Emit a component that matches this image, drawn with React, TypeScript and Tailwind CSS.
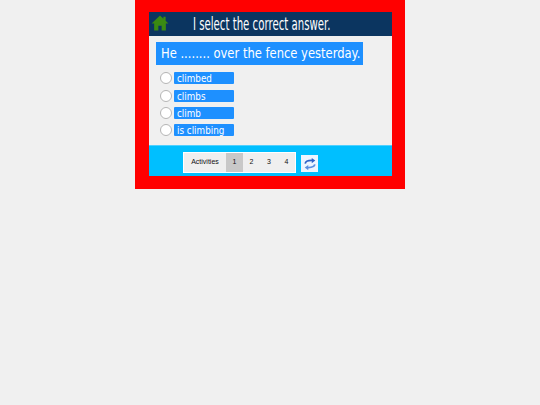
import React from 'react';

const options = [
  { label: 'climbed', mb: 'mb-[5px]' },
  { label: 'climbs', mb: 'mb-[4px]' },
  { label: 'climb', mb: 'mb-[4px]' },
  { label: 'is climbing', mb: '' },
];

const App: React.FC = () => {
  return (
    <div className="w-[540px] h-[405px] bg-[#f0f0f0] font-['DejaVu_Sans',sans-serif]">
      <div className="mx-auto w-[270px] h-[189px] bg-[#ff0000] pt-3 pl-[14px] pr-[13px]">
        <div className="h-6 bg-[#0b3560] flex items-center">
          <svg viewBox="0 0 24 24" className="w-[18px] h-[18px] ml-[2px] mb-[3px] shrink-0" fill="#3a8a12">
            <path d="M12 2 .8 12.6h3.4V22h5.6v-6.5h4.4V22h5.6v-9.4h3.4l-3.7-3.5V3.5h-3v2.8z" />
          </svg>
          <span className="ml-[24px] shrink-0 text-[18px] leading-6 text-white whitespace-nowrap inline-block origin-left scale-x-[0.565]">
            I select the correct answer.
          </span>
        </div>
        <div className="h-[109px] bg-[#f0f0f0] pt-[6px] pl-[7px]">
          <div className="w-[207px] h-[23px] bg-[#1e90ff] text-white text-[13.5px] leading-[22px] pl-[5px] whitespace-nowrap overflow-hidden">
            <span className="inline-block origin-left scale-x-[0.855]">He ........ over the fence yesterday.</span>
          </div>
          <div className="mt-[6px] flex flex-col">
            {options.map((o) => (
              <div key={o.label} className={`flex items-center ${o.mb}`}>
                <span className="w-[12px] h-[12px] ml-[4px] mt-[1px] rounded-full bg-white border border-[#b5b5b5]" />
                <span className="ml-[2px] w-[60px] h-[12px] rounded-[1px] bg-[#1e90ff] text-white text-[10px] leading-[13px] pl-[3px] whitespace-nowrap">
                  <span className="inline-block origin-left scale-x-[0.88]">{o.label}</span>
                </span>
              </div>
            ))}
          </div>
        </div>
        <div className="h-[31px] bg-[#00bfff] border-t border-[#4fd0ff] flex items-start pt-[6px] pl-[34px]">
          <div className="h-[21px] bg-[#efefef] border border-white flex items-center font-['Liberation_Sans',sans-serif] text-[7px] text-[#111]">
            <span className="w-[42px] text-center">Activities</span>
            <span className="w-[17px] h-full bg-[#c8c8c8] flex items-center justify-center">1</span>
            <span className="w-[17px] text-center">2</span>
            <span className="w-[18px] text-center">3</span>
            <span className="w-[17px] text-center">4</span>
          </div>
          <div className="ml-[5px] mt-[3px] w-[17px] h-[17px] bg-[#eef5ff] flex items-center justify-center">
            <svg viewBox="0 0 16 16" className="w-[14px] h-[14px]" fill="none" stroke="#2f62c8" strokeWidth="2">
              <path d="M2.5 7.5C3 4.5 6 3.8 11 4" />
              <path d="M10 1l4 3-4 3z" fill="#2f62c8" stroke="none" />
              <path d="M13.5 8.5C13 11.5 10 12.2 5 12" stroke="#5b8fe0" />
              <path d="M6 9l-4 3 4 3z" fill="#5b8fe0" stroke="none" />
            </svg>
          </div>
        </div>
      </div>
    </div>
  );
};

export default App;
